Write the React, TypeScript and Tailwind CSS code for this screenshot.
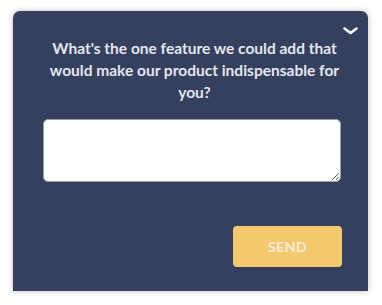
export default function App() {
  return (
    <div className="min-h-[305px] bg-white pt-[11px] pl-[13px]">
      <div className="relative w-[355px] h-[280px] rounded-t-[7px] bg-[#34405d] shadow-[0_0_6px_rgba(0,0,0,0.25)] pl-[30px] pr-[26px] pt-[26px]" style={{ fontFamily: "Lato, 'Open Sans', sans-serif" }}>
        <button className="absolute right-[10px] top-[14px] w-4 h-3 flex items-center justify-center">
          <svg width="15" height="8" viewBox="0 0 15 8" fill="none">
            <path d="M1.5 1.5 L7.5 6 L13.5 1.5" stroke="#ffffff" strokeWidth="2.6" strokeLinecap="round" strokeLinejoin="round" />
          </svg>
        </button>
        <p className="text-center text-[15.5px] leading-[22px] font-bold text-[#e4e6ec] -mr-[4px]">
          What's the one feature we could add that would make our product indispensable for you?
        </p>
        <textarea className="mt-[16px] block w-[298px] h-[63px] rounded-[5px] border border-[#9aa0ab] bg-white" />
        <div className="flex justify-end mt-[44px]">
          <button className="w-[109px] h-[41px] rounded-[4px] bg-[#f5c96b] text-[#f3ede0] text-[14px] font-bold tracking-[0.5px]">
            SEND
          </button>
        </div>
      </div>
    </div>
  );
}
